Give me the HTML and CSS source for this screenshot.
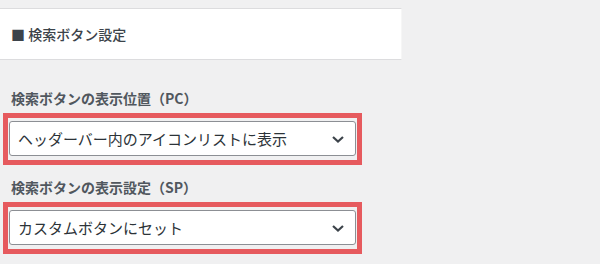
FILE: index.html
```html
<!DOCTYPE html>
<html lang="ja">
<head>
    <meta charset="UTF-8">
    <meta name="viewport" content="width=device-width, initial-scale=1.0">
    <title>検索ボタン設定</title>
    <link rel="stylesheet" href="styles.css">
</head>
<body>

    <div class="section-head">
        <h3>■ 検索ボタン設定</h3>
    </div>

    <div class="control">
        <p class="control-label">検索ボタンの表示位置（PC）</p>
        <div class="mark">
            <div class="select">
                <span>ヘッダーバー内のアイコンリストに表示</span>
                <svg width="14" height="10" viewBox="0 0 14 10"><path d="M2 3 L7 7.5 L12 3" fill="none" stroke="#3c434a" stroke-width="2.2"/></svg>
            </div>
        </div>
    </div>

    <div class="control">
        <p class="control-label">検索ボタンの表示設定（SP）</p>
        <div class="mark">
            <div class="select">
                <span>カスタムボタンにセット</span>
                <svg width="14" height="10" viewBox="0 0 14 10"><path d="M2 3 L7 7.5 L12 3" fill="none" stroke="#3c434a" stroke-width="2.2"/></svg>
            </div>
        </div>
    </div>

</body>
</html>
```

FILE: styles.css
```css
body {
    margin: 0;
    background: #f0f0f1;
    font-family: "Noto Sans CJK JP", "Liberation Sans", sans-serif;
    color: #3c434a;
    width: 600px;
    height: 264px;
    overflow: hidden;
}
.section-head {
    margin-top: 8px;
    width: 401px;
    height: 50px;
    background: #fff;
    border-top: 1px solid #dcdcde;
    border-bottom: 1px solid #dcdcde;
    border-right: 1px solid #f6f6f6;
    display: flex;
    align-items: center;
}
.section-head h3 {
    margin: 0 0 0 11px;
    font-size: 14px;
    font-weight: 500;
    color: #3c434a;
}
.control {
    padding-top: 28px;
}
.control + .control {
    padding-top: 12px;
}
.control-label {
    margin: 0 0 5px 11px;
    font-size: 14px;
    font-weight: bold;
    line-height: 20px;
    color: #50575e;
}
.mark {
    margin-left: 3px;
    width: 347px;
    border: 5px solid #e65a5e;
    padding: 3px 1px 4px 1px;
}
.select {
    height: 33px;
    background: #fff;
    border: 1px solid #8c8f94;
    border-radius: 3px;
    display: flex;
    align-items: center;
    justify-content: space-between;
    padding: 0 10px 0 8px;
    font-size: 15px;
    color: #2c3338;
}
.select svg {
    display: block;
}
```
